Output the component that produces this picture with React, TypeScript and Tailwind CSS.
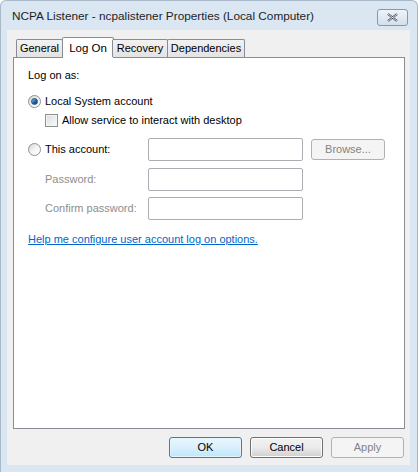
import React from 'react';

const tabs = [
  { label: 'General', w: 'w-[47px]' },
  { label: 'Log On', w: 'w-[52px]', active: true },
  { label: 'Recovery', w: 'w-[56px]' },
  { label: 'Dependencies', w: 'w-[78px]' },
];

function Radio({ checked }: { checked?: boolean }) {
  return (
    <div className="w-[13px] h-[13px] rounded-full border border-[#8e8f8f] bg-gradient-to-br from-[#d6d6d6] via-[#f4f4f4] to-[#ffffff] flex items-center justify-center shrink-0">
      {checked && (
        <div className="w-[7px] h-[7px] rounded-full bg-gradient-to-br from-[#8fd2f5] via-[#1b6fb0] to-[#0b3e6e] border border-[#1a4f7c]" />
      )}
    </div>
  );
}

function TextBox() {
  return <div className="w-[155px] h-[23px] rounded-[2px] border border-[#abadb3] bg-white" />;
}

function Button({ children, primary, disabled, className = '' }: { children: React.ReactNode; primary?: boolean; disabled?: boolean; className?: string }) {
  return (
    <div
      className={
        'h-[21px] w-[73px] rounded-[3px] border flex items-center justify-center text-[11px] ' +
        (disabled
          ? 'border-[#adb2b5] bg-[#f4f4f4] text-[#838383] '
          : primary
          ? 'border-[#3c7fb1] bg-gradient-to-b from-[#eaf6fd] via-[#d9f0fc] to-[#bee6fd] text-black shadow-[inset_0_0_0_1px_#e4f4fc] '
          : 'border-[#707070] bg-gradient-to-b from-[#f2f2f2] via-[#ebebeb] to-[#cfcfcf] text-black shadow-[inset_0_0_0_1px_#fcfcfc] ') +
        className
      }
    >
      {children}
    </div>
  );
}

export default function App() {
  return (
    <div
      className="w-[418px] h-[472px] bg-[#dbe6f3] flex flex-col rounded-t-[6px] border-t border-x border-[#a9b8c9] overflow-hidden"
      style={{ fontFamily: '"Liberation Sans", Arial, sans-serif' }}
    >
      {/* Title bar */}
      <div className="h-[29px] flex items-center justify-between pl-[11px] pr-[9px] shrink-0">
        <span className="text-[11.8px] text-[#1e1e1e] pt-[3px]">NCPA Listener - ncpalistener Properties (Local Computer)</span>
        <div className="w-[31px] h-[17px] mt-[4px] rounded-[3px] border border-[#8a97a8] bg-gradient-to-b from-[#eef3f9] to-[#d4dfec] flex items-center justify-center">
          <svg width="11" height="9" viewBox="0 0 11 9">
            <path d="M1 1 L10 8 M10 1 L1 8" stroke="#3b4452" strokeWidth="2.2" fill="none" />
            <path d="M1 1 L10 8 M10 1 L1 8" stroke="#ffffff" strokeWidth="0.8" fill="none" />
          </svg>
        </div>
      </div>

      {/* Client area */}
      <div className="ml-[6px] w-[403px] h-[435px] bg-[#f0f0f0] flex flex-col text-[11px] text-black">
        {/* Tabs */}
        <div className="flex items-end pl-[9px] pt-[7px] h-[27px] relative z-10">
          {tabs.map((t) =>
            t.active ? (
              <div
                key={t.label}
                className={`${t.w} -mx-[1px] h-[21px] -mb-px bg-white border border-b-0 border-[#898c95] rounded-t-[2px] flex justify-center pt-[2px] text-[11.5px]`}
              >
                {t.label}
              </div>
            ) : (
              <div
                key={t.label}
                className={`${t.w} h-[18px] bg-gradient-to-b from-[#f2f2f2] to-[#e3e3e3] border border-b-0 border-[#898c95] rounded-t-[2px] flex justify-center items-center text-[11px] -ml-px first:ml-0`}
              >
                {t.label}
              </div>
            )
          )}
        </div>

        {/* Panel */}
        <div className="ml-[6px] w-[392px] h-[372px] bg-white border border-[#898c95] pl-[14px] pt-[10px] flex flex-col">
          <div className="h-[15px] leading-[15px]">Log on as:</div>

          <div className="mt-[11px] h-[15px] flex items-center gap-[4px]">
            <Radio checked />
            <span>Local System account</span>
          </div>

          <div className="mt-[4px] h-[15px] flex items-center gap-[4px] pl-[17px]">
            <div className="w-[13px] h-[13px] border border-[#8e8f8f] bg-gradient-to-br from-[#dcdcdc] to-[#fbfbfb] shadow-[inset_0_0_0_1px_#f4f4f4]" />
            <span>Allow service to interact with desktop</span>
          </div>

          <div className="mt-[10px] h-[23px] flex items-center">
            <div className="w-[120px] flex items-center gap-[4px]">
              <Radio />
              <span>This account:</span>
            </div>
            <TextBox />
            <Button disabled className="ml-[8px] w-[74px] h-[20px]">Browse...</Button>
          </div>

          <div className="mt-[7px] h-[23px] flex items-center text-[#8d8d8d]">
            <div className="w-[120px] pl-[17px]">Password:</div>
            <TextBox />
          </div>

          <div className="mt-[6px] h-[23px] flex items-center text-[#8d8d8d]">
            <div className="w-[120px] pl-[17px]">Confirm password:</div>
            <TextBox />
          </div>

          <div className="mt-[12px] h-[15px] leading-[15px] text-[#0066cc] underline">
            Help me configure user account log on options.
          </div>
        </div>

        {/* Buttons */}
        <div className="mt-[8px] flex justify-end gap-[8px] pr-[6px]">
          <Button primary>OK</Button>
          <Button>Cancel</Button>
          <Button disabled>Apply</Button>
        </div>
      </div>
    </div>
  );
}
